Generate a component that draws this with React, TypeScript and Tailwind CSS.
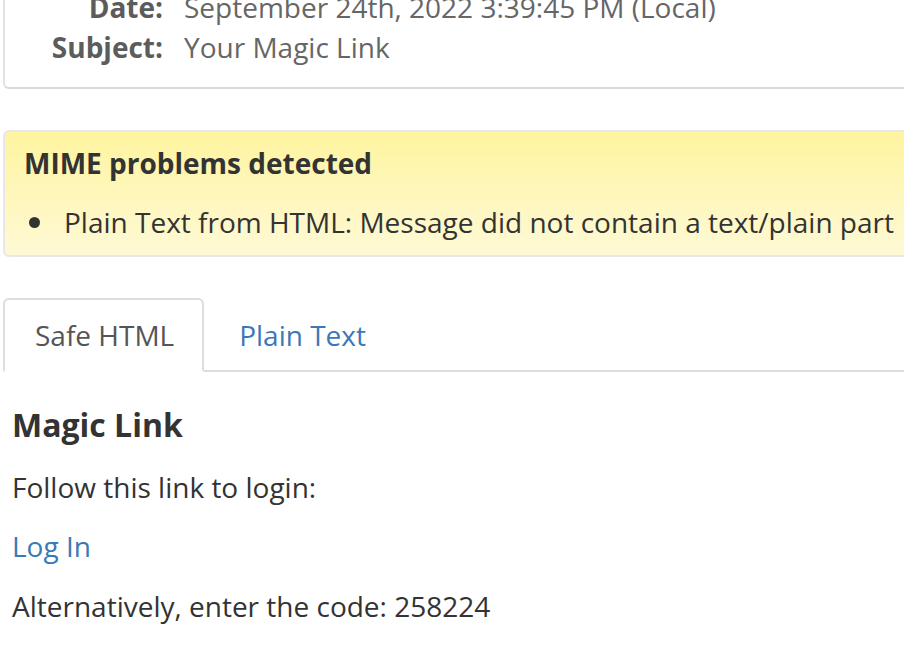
import React from 'react';

const headerRows = [
  { label: 'Date:', value: 'September 24th, 2022 3:39:45 PM (Local)' },
  { label: 'Subject:', value: 'Your Magic Link' },
];

const App: React.FC = () => {
  return (
    <div
      className="w-[904px] h-[650px] overflow-hidden bg-white pl-[3px] text-[28px] leading-[40px] text-[#333]"
      style={{ fontFamily: '"Open Sans", "Liberation Sans", sans-serif' }}
    >
      {/* Message header card */}
      <div className="-mt-[40px] -mr-[40px] border-2 border-[#e2e2e2] border-b-[#d9d9d9] rounded-[6px] pt-[25px] pb-[20px]">
        {headerRows.map((row) => (
          <div key={row.label} className="flex">
            <div className="w-[158px] shrink-0 text-right font-bold text-[#5c5c5c]">{row.label}</div>
            <div className="pl-[21px] whitespace-nowrap text-[#666]">{row.value}</div>
          </div>
        ))}
      </div>

      {/* MIME warning */}
      <div className="mt-[41px] -mr-[40px] border-2 border-[#e8e8e8] rounded-[6px] bg-gradient-to-b from-[#fff49f] to-[#fef9d5] pt-[11px] pb-[13px] pl-[19px]">
        <div className="font-bold">MIME problems detected</div>
        <ul className="mt-[19px]">
          <li className="flex items-center whitespace-nowrap">
            <span className="ml-[5px] mr-[24px] w-[11px] h-[11px] rounded-full bg-[#333] shrink-0" />
            Plain Text from HTML: Message did not contain a text/plain part
          </li>
        </ul>
      </div>

      {/* Tabs */}
      <ul className="mt-[41px] flex border-b-2 border-[#ddd] -mr-[40px]">
        <li className="-mb-[2px] border-2 border-[#ddd] border-b-transparent rounded-t-[6px] bg-white pl-[30px] pr-[28px] py-[15px] text-[#555]">
          Safe HTML
        </li>
        <li className="ml-[3px] -mb-[2px] border-2 border-transparent px-[30px] py-[15px] text-[#3b78b7]">
          Plain Text
        </li>
      </ul>

      {/* Message body */}
      <div className="pl-[9px]">
        <h1 className="mt-[33px] text-[32px] leading-[40px] font-bold">Magic Link</h1>
        <p className="mt-[22px]">Follow this link to login:</p>
        <p className="mt-[19px]">
          <a href="#" className="text-[#3b78b7]">Log In</a>
        </p>
        <p className="mt-[20px]">Alternatively, enter the code: 258224</p>
      </div>
    </div>
  );
};

export default App;
